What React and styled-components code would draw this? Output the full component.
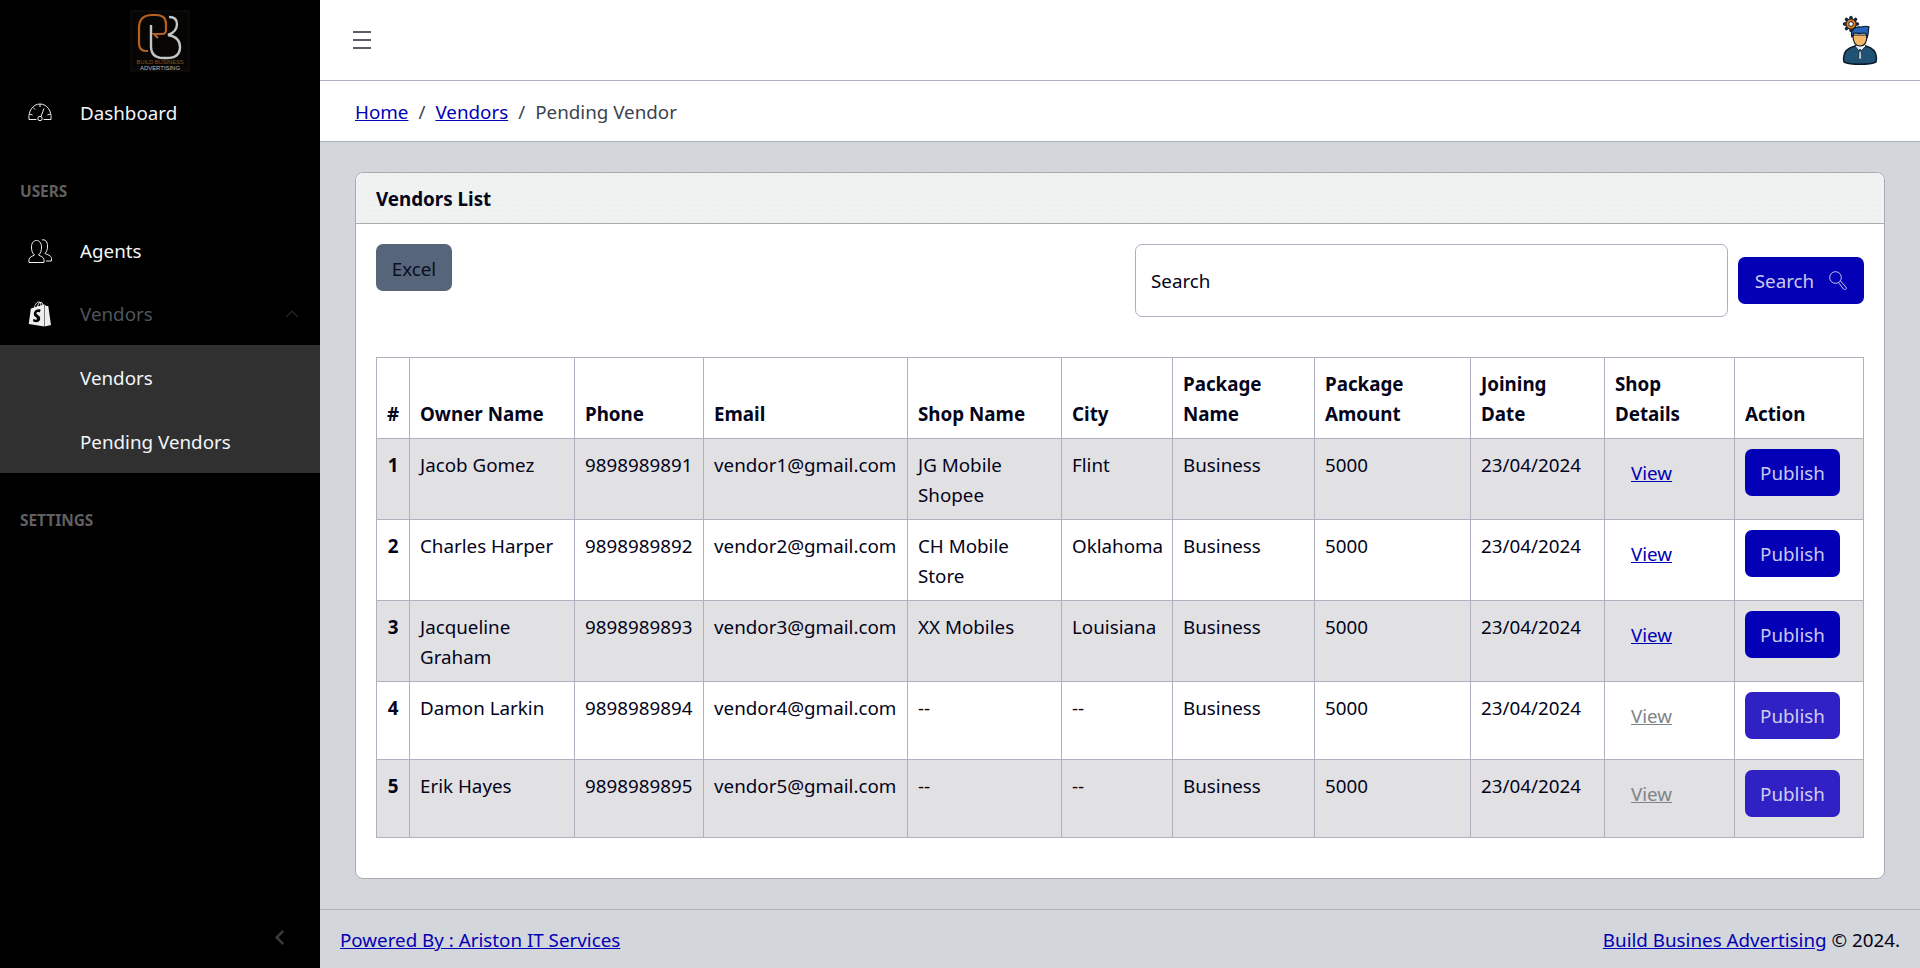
import React from "react";
import styled, { createGlobalStyle } from "styled-components";
import { SlArrowUp } from "react-icons/sl";
import { FaShopify, FaChevronLeft } from "react-icons/fa";

const Global = createGlobalStyle`
  * { box-sizing: border-box; }
  html, body { margin: 0; padding: 0; }
  body {
    font-family: "Noto Sans", "Open Sans", sans-serif;
    font-size: 18.8px;
    line-height: 30px;
    color: #04041a;
    background: #d3d6db;
  }
`;

const Shell = styled.div`
  display: grid;
  grid-template-columns: 320px 1fr;
  height: 968px;
  overflow: hidden;
`;

const Sidebar = styled.aside`
  background: #000;
  display: flex;
  flex-direction: column;
  height: 100%;
`;

const Brand = styled.div`
  height: 81px;
  display: flex;
  align-items: center;
  justify-content: center;
`;

const NavItem = styled.div`
  height: 63px;
  display: flex;
  align-items: center;
  padding-left: 28px;
  padding-right: 22px;
  color: ${(p) => (p.$dim ? "#4f555b" : "#f2f6fb")};
`;

const NavIcon = styled.span`
  width: 24px;
  height: 26px;
  margin-right: 28px;
  display: flex;
  align-items: center;
  justify-content: center;
  font-size: ${(p) => p.$size || 24}px;
  color: #eee;
`;

const NavText = styled.span`
  flex: 1;
`;

const Caret = styled.span`
  display: flex;
  font-size: 12px;
  color: #3c3c3c;
`;

const NavTitle = styled.div`
  padding: 38px 20px 17px;
  font-size: 15.4px;
  line-height: 20px;
  font-weight: 700;
  text-transform: uppercase;
  color: #606060;
`;

const SubNav = styled.div`
  background: #303030;
`;

const SubItem = styled.div`
  height: 64px;
  display: flex;
  align-items: center;
  padding: 2px 0 0 80px;
  color: #f2f6fb;
`;

const Toggler = styled.div`
  margin-top: auto;
  height: 62px;
  display: flex;
  align-items: center;
  justify-content: flex-end;
  padding-right: 32px;
  color: #3a3a3a;
  font-size: 17px;
`;

const Main = styled.main`
  display: flex;
  flex-direction: column;
  height: 100%;
  min-width: 0;
`;

const TopBar = styled.header`
  height: 81px;
  background: #fff;
  border-bottom: 1px solid #aeb2c0;
  display: flex;
  align-items: center;
  justify-content: space-between;
  padding: 0 42px 0 33px;
`;

const Crumbs = styled.nav`
  height: 61px;
  background: #fff;
  border-bottom: 1px solid #aeb0b8;
  display: flex;
  align-items: center;
  padding: 1px 0 0 35px;
`;

const Link = styled.a`
  color: #0300b5;
  text-decoration: underline;
`;

const Sep = styled.span`
  padding: 0 10px;
  color: #3b4350;
`;

const Current = styled.span`
  color: #3b4350;
`;

const Content = styled.div`
  padding: 30px 35px;
`;

const Card = styled.section`
  background: #fff;
  border: 1px solid #a9abb1;
  border-radius: 8px;
  overflow: hidden;
`;

const CardHead = styled.div`
  height: 51px;
  display: flex;
  align-items: center;
  padding: 1px 20px 0;
  font-weight: 700;
  color: #04041a;
  border-bottom: 1px solid #a9abb1;
  background-color: #eff2f1;
  background-image: radial-gradient(#e6e9e8 0.7px, transparent 0.8px);
  background-size: 5px 5px;
`;

const CardBody = styled.div`
  padding: 20px 20px 40px;
`;

const Toolbar = styled.div`
  display: flex;
  justify-content: space-between;
  align-items: flex-start;
  margin-bottom: 40px;
`;

const ExcelButton = styled.button`
  height: 47px;
  width: 76px;
  border: 0;
  border-radius: 7px;
  background: #56657a;
  color: #0a0f1e;
  font: inherit;
  padding: 3px 0 0;
`;

const SearchGroup = styled.form`
  display: flex;
  align-items: center;
  gap: 10px;
`;

const SearchInput = styled.input`
  width: 593px;
  height: 73px;
  border: 1px solid #aeb0bd;
  border-radius: 7px;
  padding: 0 15px;
  font: inherit;
  color: #04041a;
  background: #fff;
  outline: none;
  &::placeholder {
    color: #04041a;
    opacity: 1;
  }
`;

const PrimaryButton = styled.button`
  height: 47px;
  width: ${(p) => p.$width}px;
  border: 0;
  border-radius: 7px;
  background: ${(p) => (p.$muted ? "#3021c4" : "#0300b5")};
  color: ${(p) => (p.$muted ? "#cfcdee" : "#c9c8ee")};
  font: inherit;
  padding: 0;
  display: inline-flex;
  align-items: center;
  justify-content: center;
  gap: 15px;
`;

const Table = styled.table`
  width: 1487px;
  table-layout: fixed;
  border-collapse: collapse;
`;

const Th = styled.th`
  border: 1px solid #b0b1bf;
  padding: 11px 10px 9px;
  text-align: left;
  vertical-align: bottom;
  font-weight: 700;
`;

const Row = styled.tr`
  background: ${(p) => (p.$shaded ? "#e1e1e4" : "#fff")};
`;

const Td = styled.td`
  border: 1px solid #b0b1bf;
  padding: 11px 10px 9px;
  vertical-align: top;
  font-weight: ${(p) => (p.$bold ? 700 : 400)};
  text-align: ${(p) => (p.$center ? "center" : "left")};
`;

const ViewLink = styled.a`
  display: block;
  line-height: 47px;
  margin: 0 0 10px;
  padding-left: 16px;
  text-decoration: underline;
  color: ${(p) => (p.$muted ? "#7f8489" : "#0300b5")};
`;

const PublishCell = styled.div`
  margin-top: -1px;
  padding: 0 0 11px;
  display: flex;
`;

const Footer = styled.footer`
  margin-top: auto;
  height: 59px;
  border-top: 1px solid #b0b2ba;
  display: flex;
  align-items: center;
  justify-content: space-between;
  padding: 2px 20px 0;
`;

const widths = [33, 165, 129, 204, 154, 111, 142, 156, 134, 130, 129];
const heads = ["#", "Owner Name", "Phone", "Email", "Shop Name", "City", "Package Name", "Package Amount", "Joining Date", "Shop Details", "Action"];
const rows = [
  ["Jacob Gomez", "9898989891", "vendor1@gmail.com", "JG Mobile Shopee", "Flint", false],
  ["Charles Harper", "9898989892", "vendor2@gmail.com", "CH Mobile Store", "Oklahoma", false],
  ["Jacqueline Graham", "9898989893", "vendor3@gmail.com", "XX Mobiles", "Louisiana", false],
  ["Damon Larkin", "9898989894", "vendor4@gmail.com", "--", "--", true],
  ["Erik Hayes", "9898989895", "vendor5@gmail.com", "--", "--", true],
];

const Logo = () => (
  <svg width="60" height="62" viewBox="0 0 60 62">
    <rect x="1" y="1" width="58" height="60" fill="#070605" stroke="#171310" strokeWidth="1" />
    <path d="M18 41H16Q9 41 9 33V18Q9 5 22 5H26Q36 5 36 14V20Q36 24 32 24H24L28 28" fill="none" stroke="#b5611f" strokeWidth="2.2" />
    <path d="M21 15V36Q21 48 33 48H37Q50 48 50 37Q50 27 38 25Q47 22 47 14Q47 7 39 7" fill="none" stroke="#c4c5c5" strokeWidth="2.4" />
    <text x="30" y="54" textAnchor="middle" fontSize="5" textLength="47" lengthAdjust="spacingAndGlyphs" fill="#8d4e1c" fontFamily="Liberation Sans, sans-serif">BUILD BUSINESS</text>
    <text x="30" y="59.5" textAnchor="middle" fontSize="4.6" textLength="40" lengthAdjust="spacingAndGlyphs" fill="#b9b9b9" fontFamily="Liberation Sans, sans-serif">ADVERTISING</text>
  </svg>
);

const Avatar = () => (
  <svg width="36" height="50" viewBox="0 0 36 50">
    <g transform="translate(9 9)">
      <g stroke="#1a2433" strokeWidth="3.4" strokeLinecap="round">
        {[0, 45, 90, 135].map((a) => (
          <line key={a} x1="-6.5" y1="0" x2="6.5" y2="0" transform={`rotate(${a})`} />
        ))}
      </g>
      <circle r="5.2" fill="#d97f25" stroke="#1a2433" strokeWidth="1.2" />
      <circle r="2.3" fill="#fff" stroke="#1a2433" strokeWidth="1" />
    </g>
    <path d="M2 47C0 38 5 33 13 31L18 34L24 31C31 33 36 38 34 47C28 50 8 50 2 47Z" fill="#1f5273" stroke="#0d1a2b" strokeWidth="1.4" />
    <path d="M13 31L17 36L18 34L19 36L24 31L22 29H15Z" fill="#e8eef2" stroke="#0d1a2b" strokeWidth="0.8" />
    <path d="M17.2 36H19L19.4 43L18 45L16.8 43Z" fill="#dfe6ea" stroke="#0d1a2b" strokeWidth="0.6" />
    <path d="M11 20C11 28 14 31 18 31C22 31 25 28 25 20Z" fill="#f6b867" stroke="#0d1a2b" strokeWidth="1.2" />
    <path d="M10 22C8 16 12 11 19 12C22 11 26 11 27 12C26 14 27 18 25 23C25 20 24 18 22 18C18 19 14 18 12 18C11 19 11 21 10 22Z" fill="#2463b5" stroke="#0d1a2b" strokeWidth="1.2" />
  </svg>
);

const MenuIcon = () => (
  <svg width="19" height="18" viewBox="0 0 19 18">
    <path d="M0 1H18M0 9H18M0 17H18" stroke="#2a2a35" strokeWidth="1.5" fill="none" />
  </svg>
);

const GaugeIcon = () => (
  <svg width="24" height="19" viewBox="0 0 24 19" fill="none" stroke="#eee" strokeWidth="1">
    <path d="M8.5 16.5H1C0 8 5 1 12 1C19 1 24 8 23 16.5H15.5" />
    <path d="M13 13.5L16 5.5" />
    <circle cx="12" cy="15.5" r="2.2" />
    <path d="M12 1V4M5 4.5L7 6.5M1.6 11L4.6 12M22.4 11L19.4 12" />
  </svg>
);

const PeopleIcon = () => (
  <svg width="24" height="24" viewBox="0 0 24 24" fill="none" stroke="#eee" strokeWidth="1">
    <path d="M1 23.5H16V20.5C16 18 12 17 10.5 16C13 14 13.5 11 13.5 8C13.5 3.5 11 1.5 8.5 1.5C6 1.5 3.5 3.5 3.5 8C3.5 11 4 14 6.5 16C5 17 1 18 1 20.5Z" />
    <path d="M14 1C17 0 19.5 2.5 19.5 7C19.5 10 19 12.5 17 14.5C19 15.5 23.5 16.5 23.5 19.5V22H18" />
  </svg>
);

const SearchGlass = () => (
  <svg width="18" height="19" viewBox="0 0 18 19" fill="none" stroke="#c9c8ee" strokeWidth="1">
    <circle cx="6.5" cy="6.5" r="5.8" />
    <path d="M9.5 11.5L14.5 18A1.5 1.5 0 0 0 17 16.2L11.5 10" />
  </svg>
);

export default function App() {
  return (
    <>
      <Global />
      <Shell>
        <Sidebar>
          <Brand>
            <Logo />
          </Brand>
          <NavItem>
            <NavIcon><GaugeIcon /></NavIcon>
            <NavText>Dashboard</NavText>
          </NavItem>
          <NavTitle>Users</NavTitle>
          <NavItem>
            <NavIcon><PeopleIcon /></NavIcon>
            <NavText>Agents</NavText>
          </NavItem>
          <NavItem $dim>
            <NavIcon $size={26}><FaShopify /></NavIcon>
            <NavText>Vendors</NavText>
            <Caret><SlArrowUp /></Caret>
          </NavItem>
          <SubNav>
            <SubItem>Vendors</SubItem>
            <SubItem>Pending Vendors</SubItem>
          </SubNav>
          <NavTitle>Settings</NavTitle>
          <Toggler><FaChevronLeft /></Toggler>
        </Sidebar>
        <Main>
          <TopBar>
            <MenuIcon />
            <Avatar />
          </TopBar>
          <Crumbs>
            <Link href="#">Home</Link>
            <Sep>/</Sep>
            <Link href="#">Vendors</Link>
            <Sep>/</Sep>
            <Current>Pending Vendor</Current>
          </Crumbs>
          <Content>
            <Card>
              <CardHead>Vendors List</CardHead>
              <CardBody>
                <Toolbar>
                  <ExcelButton>Excel</ExcelButton>
                  <SearchGroup>
                    <SearchInput placeholder="Search" />
                    <PrimaryButton type="button" $width={126}>
                      Search <SearchGlass />
                    </PrimaryButton>
                  </SearchGroup>
                </Toolbar>
                <Table>
                  <colgroup>
                    {widths.map((w, i) => (
                      <col key={i} style={{ width: w }} />
                    ))}
                  </colgroup>
                  <thead>
                    <tr>
                      {heads.map((h) => (
                        <Th key={h}>{h}</Th>
                      ))}
                    </tr>
                  </thead>
                  <tbody>
                    {rows.map((r, i) => (
                      <Row key={i} $shaded={i % 2 === 0}>
                        <Td $bold $center>{i + 1}</Td>
                        <Td>{r[0]}</Td>
                        <Td>{r[1]}</Td>
                        <Td>{r[2]}</Td>
                        <Td>{r[3]}</Td>
                        <Td>{r[4]}</Td>
                        <Td>Business</Td>
                        <Td>5000</Td>
                        <Td>23/04/2024</Td>
                        <Td>
                          <ViewLink href="#" $muted={r[5]}>View</ViewLink>
                        </Td>
                        <Td>
                          <PublishCell>
                            <PrimaryButton type="button" $width={95} $muted={r[5]}>Publish</PrimaryButton>
                          </PublishCell>
                        </Td>
                      </Row>
                    ))}
                  </tbody>
                </Table>
              </CardBody>
            </Card>
          </Content>
          <Footer>
            <Link href="#">Powered By : Ariston IT Services</Link>
            <span>
              <Link href="#">Build Busines Advertising</Link> © 2024.
            </span>
          </Footer>
        </Main>
      </Shell>
    </>
  );
}
